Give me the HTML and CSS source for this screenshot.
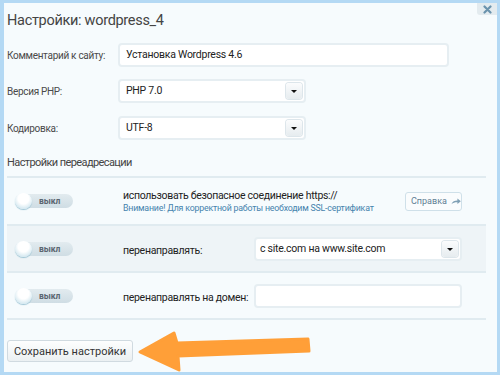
FILE: index.html
```html
<!DOCTYPE html>
<html lang="ru">
    <head>
        <meta charset="UTF-8" />
        <meta name="viewport" content="width=device-width, initial-scale=1.0" />
        <title>Настройки: wordpress_4</title>
        <link rel="stylesheet" href="styles.css">
    </head>
    <body>
        <div class="dialog">
            <button class="close" title="Закрыть">
                <svg width="9" height="9" viewBox="0 0 9 9"><path d="M1.5 1.5 L7.5 7.5 M7.5 1.5 L1.5 7.5" stroke="#6a93ad" stroke-width="2.2" stroke-linecap="round"/></svg>
            </button>
            <h1>Настройки: wordpress_4</h1>

            <div class="field">
                <label class="field-label">Комментарий к сайту:</label>
                <div class="input wide">Установка Wordpress 4.6</div>
            </div>
            <div class="field">
                <label class="field-label">Версия PHP:</label>
                <div class="input select">PHP 7.0<span class="arrow"></span></div>
            </div>
            <div class="field">
                <label class="field-label">Кодировка:</label>
                <div class="input select">UTF-8<span class="arrow"></span></div>
            </div>

            <h2>Настройки переадресации</h2>

            <div class="rows">
                <div class="row first">
                    <div class="toggle"><span class="knob"></span><span class="toggle-text">выкл</span></div>
                    <div class="row-text grow">
                        <div>использовать безопасное соединение https://</div>
                        <div class="note">Внимание! Для корректной работы необходим SSL-сертификат</div>
                    </div>
                    <button class="help">Справка
                        <svg width="11" height="7" viewBox="0 0 11 7"><path d="M0.5 6.5 C1.5 3.5 4 2.5 7 2.5 L7 0.3 L10.7 3.3 L7 6.3 L7 4.4 C4.5 4.3 2.3 5 0.5 6.5 Z" fill="#7f9fb4"/></svg>
                    </button>
                </div>
                <div class="row shaded">
                    <div class="toggle"><span class="knob"></span><span class="toggle-text">выкл</span></div>
                    <div class="row-text">перенаправлять:</div>
                    <div class="input control select">c site.com на www.site.com<span class="arrow"></span></div>
                </div>
                <div class="row">
                    <div class="toggle"><span class="knob"></span><span class="toggle-text">выкл</span></div>
                    <div class="row-text">перенаправлять на домен:</div>
                    <div class="input control"></div>
                </div>
            </div>

            <button class="save">Сохранить настройки</button>

            <!-- annotation arrow drawn over the screenshot -->
            <svg class="pointer" width="180" height="44" viewBox="0 0 180 44">
                <path d="M3 22 L37 3 L40 13 L171 9 L172 21 L41 26 L42 40 Z" fill="#ff9f38" stroke="#ff9f38" stroke-width="3" stroke-linejoin="round"/>
            </svg>
        </div>
    </body>
</html>
```

FILE: styles.css
```css
body {
    margin: 0;
    background: #b4d9f4;
    font-family: Roboto, "Liberation Sans", Arial, sans-serif;
    color: #333;
}

.dialog {
    position: relative;
    margin: 3px 3px 0 4px;
    height: 369px;
    padding: 0 11px 0 3px;
    background: #f6fbfd;
    box-sizing: border-box;
    white-space: nowrap;
}

.close {
    position: absolute;
    top: 0;
    right: 0;
    width: 20px;
    height: 12px;
    padding: 0;
    border: 0;
    border-radius: 0 0 0 3px;
    background: #e3ebef;
    display: flex;
    align-items: center;
    justify-content: center;
}

h1 {
    margin: 0;
    padding-top: 8px;
    height: 40px;
    box-sizing: border-box;
    font-size: 14.5px;
    font-weight: normal;
    letter-spacing: -0.3px;
    line-height: 20px;
    color: #444;
}

.field {
    display: flex;
    align-items: center;
    height: 24px;
    margin-bottom: 12px;
    font-size: 10px;
    letter-spacing: -0.3px;
}

.field:nth-of-type(2) {
    margin-bottom: 13px;
}

.field-label {
    width: 111px;
    color: #4a4a4a;
}

.input {
    position: relative;
    height: 24px;
    box-sizing: border-box;
    border: 2px solid #e6eef2;
    border-radius: 4px;
    background: #fff;
    padding: 0 6px;
    font-size: 10.5px;
    letter-spacing: -0.25px;
    line-height: 20px;
    color: #222;
}

.wide {
    width: 331px;
}

.select {
    width: 188px;
}

.arrow {
    position: absolute;
    right: 2px;
    top: 2px;
    width: 16px;
    height: 16px;
    border-radius: 3px;
    background: linear-gradient(#fbfcfd, #e6ecef);
    box-shadow: 0 0 0 1px #dde6eb;
}

.arrow::after {
    content: "";
    position: absolute;
    left: 5px;
    top: 7px;
    border-left: 3px solid transparent;
    border-right: 3px solid transparent;
    border-top: 3px solid #111;
}

h2 {
    margin: 0;
    height: 24px;
    font-size: 11px;
    font-weight: normal;
    letter-spacing: -0.6px;
    line-height: 22px;
    color: #444;
}

.rows {
    border-top: 2px solid #e0ebf0;
}

.row {
    display: flex;
    align-items: center;
    height: 45px;
    padding: 0 24px 0 9px;
    border-bottom: 2px solid #e0ebf0;
    font-size: 10.5px;
    letter-spacing: -0.3px;
}

.row.first {
    height: 46px;
}

.row.shaded {
    background: #eef4f7;
}

.toggle {
    position: relative;
    width: 57px;
    height: 14px;
    border-radius: 7px;
    background: linear-gradient(#e2ebef, #cfdde4);
    display: flex;
    align-items: center;
    flex-shrink: 0;
    letter-spacing: 0;
}

.knob {
    width: 17px;
    height: 16px;
    margin-left: -1px;
    border-radius: 50%;
    background: radial-gradient(circle at 50% 35%, #ffffff 40%, #d5e9f1 75%, #a9cfdf 100%);
    box-shadow: 0 1px 1px #9cc3d3;
}

.toggle-text {
    margin-left: 7px;
    font-size: 8.5px;
    font-weight: bold;
    color: #5b6670;
}

.row-text {
    width: 131px;
    margin-left: 50px;
    color: #222;
}

.row.shaded .row-text,
.row:last-child .row-text {
    padding-top: 4px;
}

.row-text.grow {
    flex: 1;
}

.note {
    margin-top: 1px;
    font-size: 8.8px;
    letter-spacing: -0.2px;
    color: #4583ad;
}

.control {
    width: 208px;
    padding: 0 4px;
}

.help {
    display: flex;
    align-items: center;
    gap: 4px;
    height: 19px;
    width: 57px;
    padding: 0 0 0 5px;
    border: 1px solid #cfe0e9;
    border-radius: 3px;
    background: #fafcfd;
    font-family: inherit;
    font-size: 9px;
    letter-spacing: 0;
    color: #5f7e93;
}

.save {
    display: block;
    margin-top: 20px;
    height: 22px;
    width: 126px;
    padding: 0;
    border: 1px solid #d0dae0;
    border-radius: 3px;
    background: linear-gradient(#fdfefe, #ebf0f2);
    font-family: inherit;
    font-size: 11px;
    color: #333;
}

.pointer {
    position: absolute;
    left: 133px;
    top: 327px;
}
```
